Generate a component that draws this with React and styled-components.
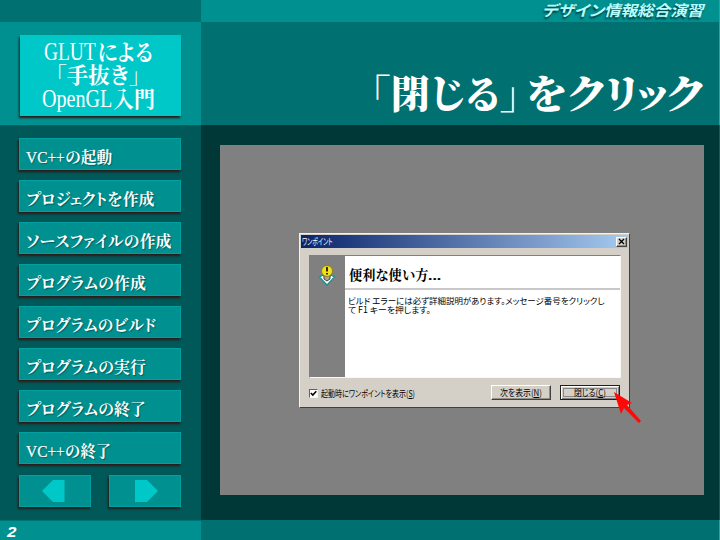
import React, { useLayoutEffect, useRef, useState } from "react";
import styled, { createGlobalStyle, css } from "styled-components";

const serif = '"Liberation Serif", "Noto Serif CJK JP", "Noto Sans CJK JP", serif';
const sans = '"Noto Sans CJK JP", "Liberation Sans", sans-serif';

const Global = createGlobalStyle`
  * { box-sizing: border-box; }
  body { margin: 0; background: #003838; }
`;

/* Text squeezed or stretched horizontally to an exact width */
const FitBox = styled.span`
  display: block;
  width: ${(p) => p.$w}px;
  flex: none;
  white-space: nowrap;
`;
const FitInner = styled.span`
  display: inline-block;
  transform-origin: 0 50%;
  font-feature-settings: "palt";
`;
function Fit({ w, children }) {
  const ref = useRef(null);
  const [scale, setScale] = useState(1);
  useLayoutEffect(() => {
    setScale(w / ref.current.offsetWidth);
  }, [w, children]);
  return (
    <FitBox $w={w}>
      <FitInner ref={ref} style={{ transform: `scaleX(${scale})` }}>{children}</FitInner>
    </FitBox>
  );
}

const Slide = styled.div`
  width: 720px;
  height: 540px;
  display: grid;
  grid-template-columns: 201px 519px;
  grid-template-rows: 22px 103px 395px 20px;
  overflow: hidden;
  font-family: ${serif};
  color: #fff;
`;
const TopLeft = styled.div`background: #007070;`;
const CourseBar = styled.header`
  background: #009090;
  border-right: 1px solid #30a0a0;
  display: flex;
  justify-content: flex-end;
  padding-right: 16px;
  font: italic 700 15px/20px ${sans};
  color: #b8ffff;
  text-shadow: -1px 2px 2px #003838;
`;
const DeckCell = styled.div`
  background: #009090;
  padding: 13px 0 0 20px;
`;
const DeckTitle = styled.div`
  width: 161px;
  height: 81px;
  padding: 5px 5px 0 0;
  background: #00c8c8;
  box-shadow: -1px 2px 2px #2a1a1a;
  display: flex;
  flex-direction: column;
  align-items: center;
  font-size: 22px;
  font-weight: 700;
  line-height: 23px;
`;
const TextLine = styled.div`
  display: flex;
  align-items: baseline;
  gap: ${(p) => p.$gap || 0}px;
`;
const DeckLatin = styled.span`
  font-weight: 400;
  font-size: 25px;
`;
const TitleCell = styled.div`
  background: #007070;
  border-right: 1px solid #30a0a0;
  display: flex;
  justify-content: flex-end;
  padding: 48px 16px 0 0;
`;
const SlideTitle = styled.h1`
  margin: 0;
  font-size: 39px;
  font-weight: 900;
  line-height: 50px;
`;
const Sidebar = styled.nav`
  background: #005858;
  border-top: 1px solid #006464;
  padding: 12px 0 0 19px;
  display: flex;
  flex-direction: column;
  gap: 10px;
`;
const panel = css`
  background: #009090;
  border: 1px solid #00a0a0;
  box-shadow: -1px 2px 2px #2a1a1a;
`;
const MenuItem = styled.div`
  ${panel}
  width: 162px;
  height: 32px;
  flex: none;
  padding: 5px 0 0 6px;
  font-size: 16px;
  font-weight: 700;
  line-height: 28px;
  text-shadow: 1px 1px 1px #006060;
`;
const MenuLatin = styled.span`
  font-weight: 400;
  font-size: 17px;
  -webkit-text-stroke: 0.2px #fff;
`;
const Arrows = styled.div`
  width: 162px;
  display: flex;
  justify-content: space-between;
  margin-top: 1px;
`;
const ArrowButton = styled.div`
  ${panel}
  width: 72px;
  height: 32px;
  display: flex;
  align-items: center;
  padding-left: ${(p) => p.$inset}px;
`;
const Stage = styled.main`
  background: #003838;
  border-right: 1px solid #205858;
  padding: 20px 0 0 19px;
`;
const Shot = styled.div`
  width: 484px;
  height: 350px;
  background: #808080;
  padding: 88px 0 0 79px;
`;
const Anchor = styled.div`
  position: relative;
  width: 331px;
  height: 175px;
`;
const Dialog = styled.div`
  width: 331px;
  height: 175px;
  background: #d4d0c8;
  border: 1px solid;
  border-color: #f4f2ee #404040 #404040 #f4f2ee;
  padding: 1px;
  color: #000;
  font-family: ${sans};
  font-size: 9px;
  line-height: 9px;
`;
const TitleBar = styled.div`
  height: 13px;
  display: flex;
  justify-content: space-between;
  align-items: center;
  padding: 0 1px 0 1px;
  background: linear-gradient(90deg, #0a246a, #a6caf0);
  color: #fff;
`;
const raised = css`
  background: #d4d0c8;
  border: 1px solid;
  border-color: #fff #404040 #404040 #fff;
  box-shadow: inset -1px -1px #909088;
`;
const Close = styled.div`
  ${raised}
  width: 11px;
  height: 10px;
  display: flex;
  align-items: center;
  justify-content: center;
`;
const Tip = styled.div`
  width: 312px;
  height: 123px;
  margin: 7px 0 0 8px;
  border: 1px solid;
  border-color: #808080 #f8f8f4 #f8f8f4 #808080;
  display: flex;
  background: #fff;
`;
const TipSide = styled.div`
  width: 35px;
  background: #808080;
  padding: 8px 0 0 8px;
`;
const TipMain = styled.div`flex: 1;`;
const TipHead = styled.div`
  height: 34px;
  border-bottom: 2px solid #c8c8c8;
  padding: 11px 0 0 4px;
  font: 700 13.5px/17px ${serif};
`;
const TipBody = styled.div`
  padding: 6px 0 0 3px;
  font-size: 8.5px;
  line-height: 9px;
`;
const Footer = styled.div`
  display: flex;
  align-items: center;
  padding: 6px 9px 0 8px;
  height: 22px;
`;
const Check = styled.span`
  width: 9px;
  height: 9px;
  flex: none;
  margin: 2px 3px 0 0;
  background: #fff;
  border: 1px solid;
  border-color: #606060 #f4f4f0 #f4f4f0 #606060;
  display: flex;
`;
const Button = styled.div`
  ${raised}
  width: ${(p) => p.$w}px;
  height: 15px;
  flex: none;
  display: flex;
  align-items: center;
  justify-content: center;
  margin-left: ${(p) => p.$gap}px;
  ${(p) => p.$default && css`
    border-color: #202020;
    box-shadow: inset 1px 1px #fff, inset -1px -1px #808080;
    outline: 1px solid #888;
    outline-offset: -4px;
  `}
`;
const CheckLabel = styled.div`
  padding-top: 3px;
`;
const Pointer = styled.svg`
  position: absolute;
  left: 314px;
  top: 159px;
`;
const FootLeft = styled.div`
  background: #009090;
  border-top: 1px solid #007474;
  padding: 2px 0 0 7px;
  font: italic 700 15px/17px "Liberation Sans", sans-serif;
`;
const FootRight = styled.div`
  background: #007070;
  border-right: 1px solid #30a0a0;
`;

const items = [
  { latin: "VC++", text: "の起動", w: 47 },
  { text: "プロジェクトを作成", w: 128 },
  { text: "ソースファイルの作成", w: 145 },
  { text: "プログラムの作成", w: 120 },
  { text: "プログラムのビルド", w: 130 },
  { text: "プログラムの実行", w: 120 },
  { text: "プログラムの終了", w: 120 },
  { latin: "VC++", text: "の終了", w: 46 },
];

export default function App() {
  return (
    <>
      <Global />
      <Slide>
        <TopLeft />
        <CourseBar><Fit w={161}>デザイン情報総合演習</Fit></CourseBar>
        <DeckCell>
          <DeckTitle>
            <TextLine $gap={1}>
              <DeckLatin><Fit w={52}>GLUT</Fit></DeckLatin>
              <Fit w={56}>による</Fit>
            </TextLine>
            <Fit w={84}>「手抜き」</Fit>
            <TextLine $gap={1}>
              <DeckLatin><Fit w={70}>OpenGL</Fit></DeckLatin>
              <Fit w={42}>入門</Fit>
            </TextLine>
          </DeckTitle>
        </DeckCell>
        <TitleCell>
          <SlideTitle>
            <TextLine $gap={7}>
              <Fit w={148}>「閉じる」</Fit>
              <Fit w={177}>をクリック</Fit>
            </TextLine>
          </SlideTitle>
        </TitleCell>
        <Sidebar>
          {items.map((it) => (
            <MenuItem key={(it.latin || "") + it.text}>
              <TextLine>
                {it.latin && <MenuLatin><Fit w={39}>{it.latin}</Fit></MenuLatin>}
                <Fit w={it.w}>{it.text}</Fit>
              </TextLine>
            </MenuItem>
          ))}
          <Arrows>
            <ArrowButton $inset={22}>
              <svg width="23" height="24"><path d="M0 12 11 1H22.500V23H11Z" fill="#00c8c8" /></svg>
            </ArrowButton>
            <ArrowButton $inset={25}>
              <svg width="23" height="24"><path d="M23 12 12 1H0V23H12Z" fill="#00c8c8" /></svg>
            </ArrowButton>
          </Arrows>
        </Sidebar>
        <Stage>
          <Shot>
            <Anchor>
              <Dialog>
                <TitleBar>
                  <Fit w={31}>ワンポイント</Fit>
                  <Close>
                    <svg width="7" height="7"><path d="M1 1 6 6M6 1 1 6" stroke="#000" strokeWidth="1.300" /></svg>
                  </Close>
                </TitleBar>
                <Tip>
                  <TipSide>
                    <svg width="18" height="22" viewBox="0 0 18 22">
                      <path d="M1.500 13 5 11 9 15 13 11 16.500 13 9 21Z" fill="#fff" stroke="#109090" strokeWidth="1.200" />
                      <path d="M6 11H12V15L9 17 6 15Z" fill="#a8a890" stroke="#333" strokeWidth=".9" />
                      <circle cx="9" cy="7" r="5.500" fill="#f0e020" stroke="#807810" strokeWidth=".8" />
                      <path d="M9 3V7.500M9 9V10.500" stroke="#000" strokeWidth="1.600" />
                    </svg>
                  </TipSide>
                  <TipMain>
                    <TipHead>
                      <TextLine>
                        <Fit w={79}>便利な使い方</Fit>
                        <Fit w={13}>...</Fit>
                      </TextLine>
                    </TipHead>
                    <TipBody>
                      <Fit w={257}>ビルド エラーには必ず詳細説明があります。メッセージ番号をクリックし</Fit>
                      <Fit w={83}>て F1 キーを押します。</Fit>
                    </TipBody>
                  </TipMain>
                </Tip>
                <Footer>
                  <Check>
                    <svg width="7" height="7"><path d="M.8 3 2.800 5 6.300 1.300" fill="none" stroke="#000" strokeWidth="1.600" /></svg>
                  </Check>
                  <CheckLabel><Fit w={94}>起動時にワンポイントを表示(<u>S</u>)</Fit></CheckLabel>
                  <Button $w={60} $gap={76}><Fit w={42}>次を表示(<u>N</u>)</Fit></Button>
                  <Button $w={60} $gap={9} $default><Fit w={32}>閉じる(<u>C</u>)</Fit></Button>
                </Footer>
              </Dialog>
              <Pointer width="30" height="34" viewBox="0 0 30 34">
                <path d="M1 0 19 11 14 13 28 29 26 31 11 16 8 22Z" fill="#ff0808" />
              </Pointer>
            </Anchor>
          </Shot>
        </Stage>
        <FootLeft><Fit w={9}>2</Fit></FootLeft>
        <FootRight />
      </Slide>
    </>
  );
}
